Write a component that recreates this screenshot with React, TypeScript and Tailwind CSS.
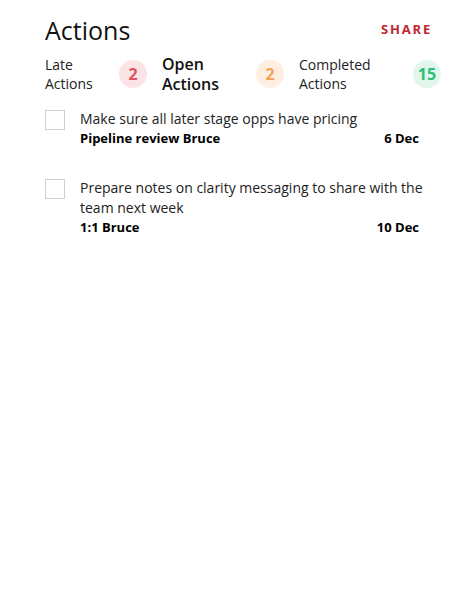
import { useState } from 'react';

const stats = [
  { label: ['Late', 'Actions'], count: 2, active: false, width: 'w-[74px]', badge: 'bg-[#fce4e6] text-[#e0525e]' },
  { label: ['Open', 'Actions'], count: 2, active: true, width: 'w-[94px]', badge: 'bg-[#fdeee0] text-[#f4a259]' },
  { label: ['Completed', 'Actions'], count: 15, active: false, width: 'w-[114px]', badge: 'bg-[#e3f6ec] text-[#2bbf7a]' },
];

const initialActions = [
  { id: 1, text: 'Make sure all later stage opps have pricing', meeting: 'Pipeline review Bruce', due: '6 Dec' },
  { id: 2, text: 'Prepare notes on clarity messaging to share with the team next week', meeting: '1:1 Bruce', due: '10 Dec' },
];

const App = () => {
  const [done, setDone] = useState<number[]>([]);

  const toggle = (id: number) =>
    setDone((d) => (d.includes(id) ? d.filter((x) => x !== id) : [...d, id]));

  return (
    <div className="min-h-screen bg-white font-['Open_Sans',sans-serif] text-[#111]">
      <div className="pl-[45px] pr-[44px] pt-[14px]">
        <div className="flex items-center justify-between">
          <h1 className="text-[25px] leading-[32px] font-normal">Actions</h1>
          <button className="text-[13px] font-bold tracking-[0.14em] text-[#c0262f]">SHARE</button>
        </div>

        <div className="mt-[8px] flex items-center">
          {stats.map((s) => (
            <div key={s.label[0]} className="flex items-center">
              <div
                className={`${s.width} ${
                  s.active
                    ? 'text-[16px] leading-[20px] font-semibold text-[#111]'
                    : 'text-[14px] leading-[19px] text-[#222]'
                }`}
              >
                <div>{s.label[0]}</div>
                <div>{s.label[1]}</div>
              </div>
              <div
                className={`mr-[15px] flex h-[28px] w-[28px] items-center justify-center rounded-full text-[16px] font-bold ${s.badge}`}
              >
                {s.count}
              </div>
            </div>
          ))}
        </div>

        <ul className="mt-[15px] flex flex-col gap-[31px]">
          {initialActions.map((a) => (
            <li key={a.id} className="flex items-start">
              <button
                onClick={() => toggle(a.id)}
                className={`mt-[1px] h-[20px] w-[20px] shrink-0 border border-[#cfcfcf] ${
                  done.includes(a.id) ? 'bg-[#2bbf7a]' : 'bg-white'
                }`}
              />
              <div className="ml-[15px] flex-1">
                <p className="text-[14px] leading-[20px] text-[#222]">{a.text}</p>
                <div className="flex justify-between pr-[13px] text-[13px] leading-[18px] font-bold text-black">
                  <span>{a.meeting}</span>
                  <span>{a.due}</span>
                </div>
              </div>
            </li>
          ))}
        </ul>
      </div>
    </div>
  );
};

export default App;
